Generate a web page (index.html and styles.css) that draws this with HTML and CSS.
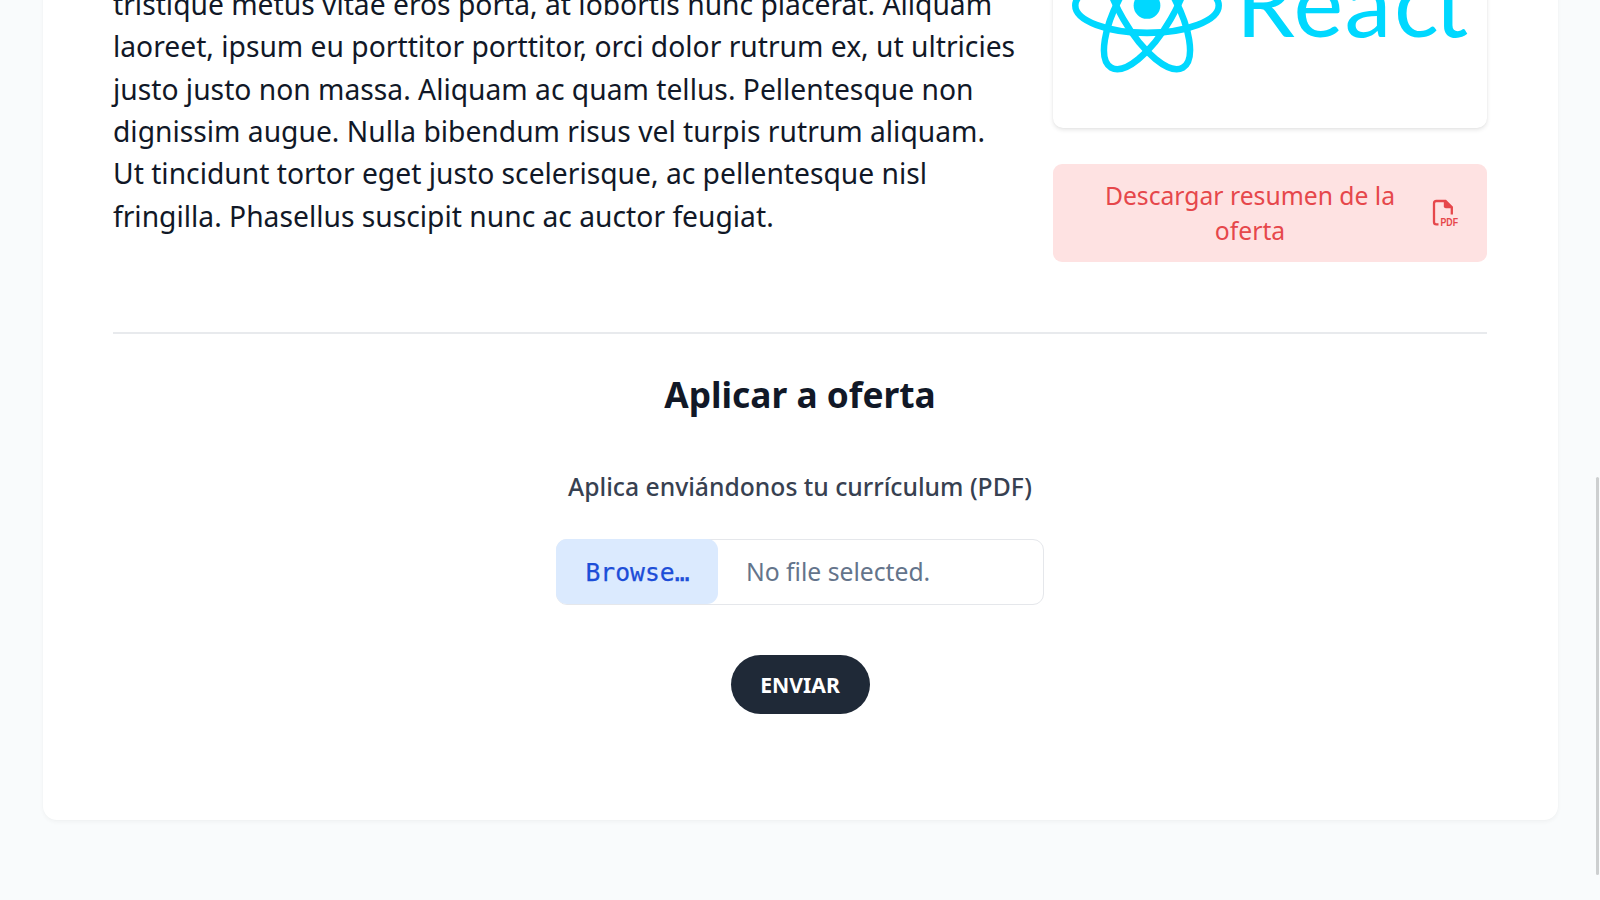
FILE: index.html
```html
<!DOCTYPE html>
<html lang="es">
<head>
<meta charset="utf-8">
<title>Aplicar a oferta</title>
<link rel="stylesheet" href="styles.css">
</head>
<body>
<main class="card">
  <div class="offer">
    <p class="description">tristique metus vitae eros porta, at lobortis nunc placerat. Aliquam<br>laoreet, ipsum eu porttitor porttitor, orci dolor rutrum ex, ut ultricies<br>justo justo non massa. Aliquam ac quam tellus. Pellentesque non<br>dignissim augue. Nulla bibendum risus vel turpis rutrum aliquam.<br>Ut tincidunt tortor eget justo scelerisque, ac pellentesque nisl<br>fringilla. Phasellus suscipit nunc ac auctor feugiat.</p>
    <aside class="side">
      <div class="logo-card">
        <svg class="logo" viewBox="0 0 434 228" role="img" aria-label="React">
          <g transform="translate(94 105.5) scale(6.52)" fill="none" stroke="#00d8ff">
            <circle r="2.05" fill="#00d8ff" stroke="none"/>
            <ellipse rx="11" ry="4.2"/>
            <ellipse rx="11" ry="4.2" transform="rotate(60)"/>
            <ellipse rx="11" ry="4.2" transform="rotate(120)"/>
          </g>
          <text class="logo-text" x="183 240.5 291.5 341 381.5" y="136.5">React</text>
        </svg>
      </div>
      <a class="download">
        <span class="download-label">Descargar resumen de la oferta</span>
        <svg class="pdf-icon" viewBox="0 0 28 28">
          <path d="M7.500 25.300H5.400Q3 25.300 3 22.900V4.400Q3 2 5.400 2H14.500L20.800 8.300V15.500" fill="none" stroke="currentColor" stroke-width="2.3"/>
          <path d="M12.800 1.500H15L21.500 8V9.300H14.800Q12.800 9.300 12.800 7.300Z" fill="currentColor"/>
          <text class="pdf-text" x="9.500" y="26.600" textLength="17.500" lengthAdjust="spacingAndGlyphs">PDF</text>
        </svg>
      </a>
    </aside>
  </div>
  <section class="apply">
    <h2 class="title">Aplicar a oferta</h2>
    <p class="hint">Aplica enviándonos tu currículum (PDF)</p>
    <div class="file">
      <span class="browse">Browse…</span>
      <span class="file-name">No file selected.</span>
    </div>
    <button class="send">ENVIAR</button>
  </section>
</main>
<div class="scroll-thumb"></div>
</body>
</html>
```
FILE: styles.css
```css
* { box-sizing: border-box; }
html, body { height: 100%; }
body {
  margin: 0;
  overflow: hidden;
  background: #f9fbfc;
  color: #111827;
  font-family: "Noto Sans", sans-serif;
  display: flex;
  flex-direction: column;
}
.card {
  flex: none;
  width: 1515px;
  height: 920px;
  margin: -100px auto 0;
  padding: 0 70.5px;
  background: #fff;
  border-radius: 14px;
  box-shadow: 0 2px 4px rgba(0, 0, 0, .04), 0 0 2px rgba(0, 0, 0, .02);
}
.offer {
  display: flex;
  justify-content: space-between;
  height: 433.5px;
  border-bottom: 2px solid #e8eaed;
}
.description {
  margin: 82.9px 0 0;
  font-size: 28.245px;
  line-height: 42.35px;
  white-space: nowrap;
}
.side { width: 434px; }
.logo-card {
  height: 228px;
  border-radius: 10px;
  box-shadow: 0 2px 4px rgba(0, 0, 0, .1), 0 0 2px rgba(0, 0, 0, .05);
}
.logo { display: block; width: 434px; height: 228px; }
.logo-text {
  font-family: Lato, sans-serif;
  font-size: 94px;
  fill: #00d8ff;
}
.download {
  display: flex;
  align-items: center;
  gap: 26px;
  height: 98px;
  margin-top: 35.5px;
  padding: 0 28px 0 42px;
  border-radius: 9px;
  background: #fee2e2;
  color: #e6474b;
  font-size: 24.7px;
  line-height: 35.3px;
  text-align: center;
}
.download-label { width: 310px; flex: none; margin-top: 1px; }
.pdf-icon { width: 28px; height: 28px; flex: none; overflow: visible; }
.pdf-text {
  font: 700 11px "Liberation Sans", sans-serif;
  fill: currentColor;
}
.apply {
  display: flex;
  flex-direction: column;
  align-items: center;
}
.title {
  margin: 36px 0 0;
  font-size: 35.3px;
  line-height: 49.4px;
  font-weight: 700;
}
.hint {
  margin: 50px 0 0;
  color: #374151;
  font-size: 24.7px;
  line-height: 35.3px;
  font-weight: 500;
}
.file {
  display: flex;
  width: 488px;
  height: 66px;
  margin-top: 35px;
  border: 1.5px solid #e5e7eb;
  border-radius: 11px;
  font-size: 24.7px;
  line-height: 64px;
  color: #64748b;
}
.browse {
  width: 162px;
  height: 65px;
  margin: -1px 0 0 -1px;
  padding-left: 1px;
  border-radius: 11px;
  background: #dbeafe;
  color: #1d4ed8;
  font-family: "DejaVu Sans Mono", monospace;
  line-height: 67px;
  text-align: center;
  -webkit-text-stroke: .25px #1d4ed8;
}
.file-name { margin-left: 28px; }
.send {
  width: 139px;
  height: 59px;
  margin: 49.5px 0 0;
  padding: 0;
  border: 0;
  border-radius: 30px;
  background: #1f2937;
  color: #fff;
  font: 700 21.2px "Noto Sans", sans-serif;
}
.scroll-thumb {
  position: absolute;
  left: 1595.5px;
  top: 477px;
  width: 3px;
  height: 398px;
  border-radius: 2px;
  background: #cdcfd0;
}
```
